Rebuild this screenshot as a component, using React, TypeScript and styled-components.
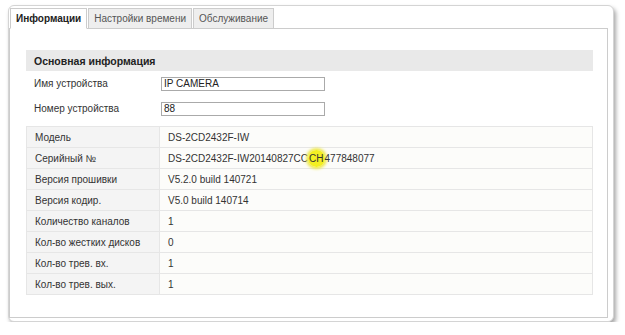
import React from 'react'
import styled, { createGlobalStyle } from 'styled-components'

const GlobalStyle = createGlobalStyle`
  html, body {
    margin: 0;
    padding: 0;
    background: #ffffff;
  }
  body {
    font-family: "Liberation Sans", Arial, sans-serif;
    font-size: 10px;
    color: #333333;
  }
`

const Page = styled.div`
  padding: 5px 0 0 8px;
`

const Card = styled.div`
  box-sizing: border-box;
  width: 606px;
  height: 317px;
  display: flex;
  flex-direction: column;
  padding: 2px 5px 3px 0;
  background: #ffffff;
  border: 1px solid #d4d4d4;
  border-radius: 6px;
  box-shadow: 2px 3px 4px rgba(0, 0, 0, 0.35);
`

const TabBar = styled.div`
  display: flex;
  gap: 1px;
  padding-left: 1px;
  margin-bottom: -1px;
`

const Tab = styled.div<{ $active?: boolean }>`
  box-sizing: border-box;
  height: 21px;
  display: flex;
  align-items: center;
  padding: 0 5px;
  border: 1px solid #cccccc;
  border-bottom: ${p => (p.$active ? '1px solid #ffffff' : '1px solid #cccccc')};
  background: ${p => (p.$active ? '#ffffff' : '#eeeeee')};
  font-weight: ${p => (p.$active ? 'bold' : 'normal')};
  color: ${p => (p.$active ? '#222222' : '#555555')};
  position: relative;
  z-index: ${p => (p.$active ? 1 : 0)};
`

const Panel = styled.div`
  flex: 1;
  border: 1px solid #cccccc;
  padding: 21px 14px 0 16px;
`

const SectionHeader = styled.div`
  height: 21px;
  display: flex;
  align-items: center;
  padding-left: 8px;
  background: #e9e9e9;
  font-weight: bold;
  font-size: 10.5px;
  color: #222222;
`

const FormRow = styled.div`
  height: 25px;
  display: grid;
  grid-template-columns: 135px 164px;
  align-items: center;
`

const FormLabel = styled.span`
  padding-left: 8px;
  color: #333333;
`

const TextBox = styled.div`
  box-sizing: border-box;
  height: 14px;
  display: flex;
  align-items: center;
  padding-left: 2px;
  border: 1px solid #aaaaaa;
  background: #ffffff;
  color: #222222;
`

const InfoTable = styled.table`
  width: 100%;
  margin-top: 5px;
  border-collapse: collapse;
  border: 1px solid #e3e3e3;
`

const Cell = styled.td<{ $label?: boolean }>`
  height: 20px;
  padding: 0 0 0 8px;
  width: ${p => (p.$label ? '124px' : 'auto')};
  border: 1px solid #e6e6e6;
  background: ${p => (p.$label ? '#f4f4f4' : '#fcfcfa')};
  color: #333333;
  white-space: nowrap;
`

const Marker = styled.span`
  background: #f3ef23;
  border-radius: 50%;
  padding: 3px 1px;
  box-shadow: 0 0 3px 2px #eee84a;
`

const rows: [string, React.ReactNode][] = [
  ['Модель', 'DS-2CD2432F-IW'],
  [
    'Серийный №',
    <>
      DS-2CD2432F-IW20140827CC<Marker>CH</Marker>477848077
    </>,
  ],
  ['Версия прошивки', 'V5.2.0 build 140721'],
  ['Версия кодир.', 'V5.0 build 140714'],
  ['Количество каналов', '1'],
  ['Кол-во жестких дисков', '0'],
  ['Кол-во трев. вх.', '1'],
  ['Кол-во трев. вых.', '1'],
]

export default function App() {
  return (
    <Page>
      <GlobalStyle />
      <Card>
        <TabBar>
          <Tab $active>Информации</Tab>
          <Tab>Настройки времени</Tab>
          <Tab>Обслуживание</Tab>
        </TabBar>
        <Panel>
          <SectionHeader>Основная информация</SectionHeader>
          <FormRow>
            <FormLabel>Имя устройства</FormLabel>
            <TextBox>IP CAMERA</TextBox>
          </FormRow>
          <FormRow>
            <FormLabel>Номер устройства</FormLabel>
            <TextBox>88</TextBox>
          </FormRow>
          <InfoTable>
            <tbody>
              {rows.map(([label, value]) => (
                <tr key={label}>
                  <Cell $label>{label}</Cell>
                  <Cell>{value}</Cell>
                </tr>
              ))}
            </tbody>
          </InfoTable>
        </Panel>
      </Card>
    </Page>
  )
}
